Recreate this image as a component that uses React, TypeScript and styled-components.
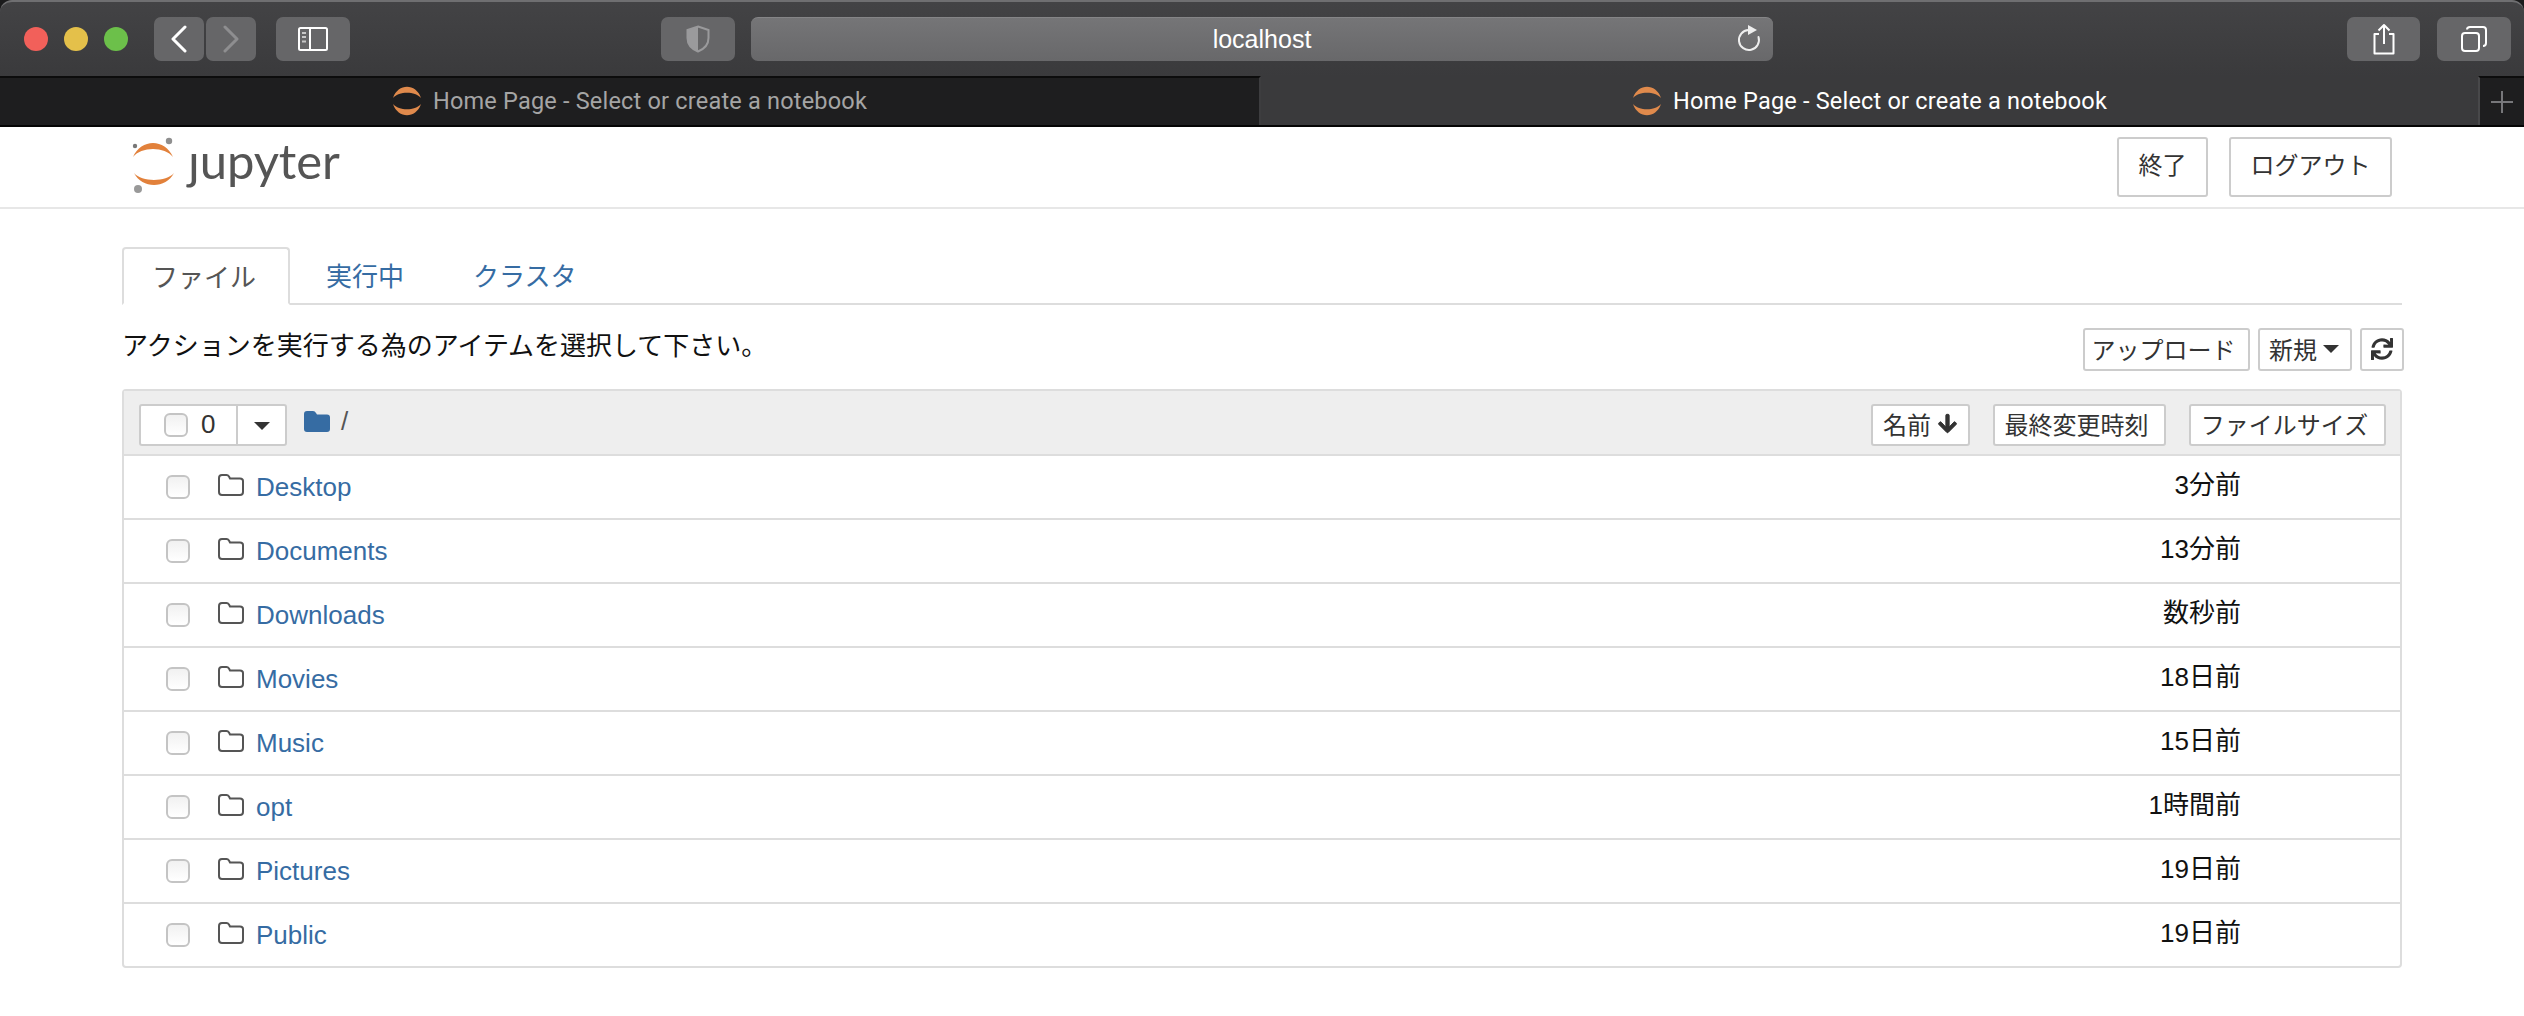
import React from "react";
import styled, { createGlobalStyle } from "styled-components";
import { FaArrowDown, FaSync } from "react-icons/fa";

const Global = createGlobalStyle`
  html, body { margin: 0; padding: 0; background: #fff; }
  body { font-family: "Liberation Sans", "Noto Sans CJK JP", sans-serif; overflow: hidden; }
  * { box-sizing: border-box; }
`;

const Window = styled.div`
  width: 2524px;
  height: 1016px;
  background: #fff;
  overflow: hidden;
`;

const Chrome = styled.div`
  background: #1b1b1c;
`;

const TitleBar = styled.div`
  height: 76px;
  display: flex;
  align-items: center;
  padding: 0 13px 0 24px;
  background: linear-gradient(#434345, #3a3a3c);
  border-top: 2px solid #6f6f71;
  border-radius: 12px 12px 0 0;
`;

const Lights = styled.div`
  display: flex;
  gap: 16px;
  margin-right: 26px;
`;

const Light = styled.span<{ $color: string }>`
  width: 24px;
  height: 24px;
  border-radius: 50%;
  background: ${(p) => p.$color};
`;

const ToolButton = styled.div<{ $w: number; $gap?: number }>`
  width: ${(p) => p.$w}px;
  height: 44px;
  margin-right: ${(p) => p.$gap ?? 0}px;
  border-radius: 7px;
  background: #666668;
  display: flex;
  align-items: center;
  justify-content: center;
  flex: none;
`;

const AddressBar = styled.div`
  position: relative;
  width: 1022px;
  height: 44px;
  border-radius: 7px;
  border-top: 1px solid #858587;
  background: linear-gradient(#757577, #68686a);
  color: #fff;
  font-size: 25px;
  display: flex;
  align-items: center;
  justify-content: center;
`;

const ReloadIcon = styled.svg`
  position: absolute;
  right: 11px;
  top: 6px;
`;

const Spacer = styled.div`
  flex: 1;
`;

const TabStrip = styled.div`
  height: 51px;
  display: flex;
  background: #3a3a3c;
  border-bottom: 2px solid #050505;
`;

const BrowserTab = styled.div<{ $active?: boolean }>`
  width: ${(p) => (p.$active ? 1217 : 1261)}px;
  background: ${(p) => (p.$active ? "#3a3a3c" : "#1e1e1f")};
  color: ${(p) => (p.$active ? "#fff" : "#a5a5a5")};
  ${(p) => (p.$active ? "" : "border-right: 2px solid #3d3d3f; border-top: 2px solid #0c0c0c; padding-bottom: 2px;")}
  display: flex;
  align-items: center;
  justify-content: center;
  gap: 11px;
  font-family: "Roboto", sans-serif;
  font-size: 23.5px;
  letter-spacing: 0.2px;
`;

const NewTab = styled.div`
  flex: 1;
  background: #1e1e1f;
  border-left: 2px solid #48484a;
  border-top: 2px solid #0c0c0c;
  display: flex;
  align-items: center;
  justify-content: center;
`;

const Header = styled.header`
  height: 82px;
  display: flex;
  align-items: center;
  padding: 0 132px 0 130px;
  border-bottom: 2px solid #e7e7e7;
`;

const Logo = styled.div`
  display: flex;
  align-items: center;
  flex: 1;
`;

const LogoText = styled.span`
  font-family: "Lato", sans-serif;
  font-size: 49px;
  line-height: 60px;
  color: #555;
  margin-left: 8px;
  padding-bottom: 14px;
  letter-spacing: -0.1px;
`;

const HeaderButton = styled.div<{ $w: number }>`
  width: ${(p) => p.$w}px;
  height: 60px;
  margin-left: 21px;
  padding-bottom: 7px;
  border: 2px solid #ccc;
  border-radius: 3px;
  display: flex;
  align-items: center;
  justify-content: center;
  font-size: 24px;
  color: #333;
`;

const Main = styled.main`
  padding: 38px 122px 0;
`;

const TabBar = styled.div`
  display: flex;
  height: 58px;
  border-bottom: 2px solid #ddd;
`;

const PageTab = styled.div<{ $active?: boolean }>`
  height: 58px;
  white-space: nowrap;
  width: ${(p) => (p.$active ? "168px" : "auto")};
  font-size: 26px;
  display: flex;
  align-items: center;
  justify-content: center;
  color: ${(p) => (p.$active ? "#555" : "#366ca3")};
  ${(p) =>
    p.$active
      ? "border: 2px solid #ddd; border-bottom: 2px solid #fff; border-radius: 4px 4px 0 0; background: #fff; padding: 0 4px 2px 0;"
      : "padding: 0 33px 3px 36px;"}
`;

const ActionRow = styled.div`
  height: 84px;
  display: flex;
  align-items: flex-start;
  justify-content: space-between;
  margin-right: -2px;
`;

const Message = styled.div`
  font-size: 26px;
  line-height: 36px;
  color: #111;
  margin-top: 23px;
`;

const ActionGroup = styled.div`
  display: flex;
  gap: 8px;
  margin-top: 23px;
`;

const SmallButton = styled.div<{ $w: number; $h?: number; $shift?: number }>`
  width: ${(p) => p.$w}px;
  height: ${(p) => p.$h ?? 43}px;
  padding: 0 ${(p) => p.$shift ?? 0}px 2px 0;
  border: 2px solid #ccc;
  border-radius: 3px;
  background: #fff;
  display: flex;
  align-items: center;
  justify-content: center;
  gap: 6px;
  font-size: 24px;
  color: #333;
  flex: none;
`;

const Caret = styled.span`
  width: 0;
  height: 0;
  border-left: 8px solid transparent;
  border-right: 8px solid transparent;
  border-top: 8px solid #333;
`;

const List = styled.div`
  border: 2px solid #ddd;
  border-radius: 4px;
`;

const ListHeader = styled.div`
  height: 65px;
  background: #eee;
  border-bottom: 2px solid #ddd;
  display: flex;
  align-items: center;
  padding: 4px 14px 0 15px;
`;

const SelectGroup = styled.div`
  width: 148px;
  height: 42px;
  display: flex;
  border: 2px solid #ccc;
  border-radius: 3px;
  background: #fff;
  flex: none;
`;

const SelectCount = styled.div`
  width: 97px;
  border-right: 2px solid #ccc;
  display: flex;
  align-items: center;
  padding-left: 23px;
  gap: 13px;
  font-size: 26px;
  color: #333;
`;

const SelectCaret = styled.div`
  flex: 1;
  display: flex;
  align-items: center;
  justify-content: center;
  padding-top: 3px;
`;

const Check = styled.span`
  display: block;
  width: 24px;
  height: 24px;
  flex: none;
  border: 2px solid #c4c4c4;
  border-radius: 6px;
  background: linear-gradient(#f1f1f1, #fff);
`;

const Crumb = styled.div`
  flex: 1;
  display: flex;
  align-items: center;
  gap: 11px;
  margin-left: 17px;
  margin-top: -7px;
  font-size: 26px;
  color: #555;
`;

const SortGroup = styled.div`
  display: flex;
  gap: 23px;
`;

const Row = styled.div`
  height: 64px;
  display: flex;
  align-items: center;
  padding: 0 159px 0 42px;
  border-bottom: 2px solid #ddd;
  &:last-child { border-bottom: 0; height: 62px; }
`;

const FolderIcon = styled.svg`
  margin-left: 28px;
  margin-right: 12px;
  margin-top: -4px;
  flex: none;
`;

const RowLink = styled.span`
  flex: 1;
  font-size: 26px;
  color: #366ca3;
`;

const RowTime = styled.span`
  font-size: 26px;
  color: #111;
  padding-bottom: 10px;
`;

const JupyterFavicon = () => (
  <svg width="30" height="30" viewBox="0 0 30 30">
    <path d="M1 12 C6 -3 24 -3 29 12 C23 5 7 5 1 12 Z" fill="#e08a4c" />
    <path d="M1 18 C6 33 24 33 29 18 C23 25 7 25 1 18 Z" fill="#e08a4c" />
  </svg>
);

const JupyterMark = () => (
  <svg width="50" height="60" viewBox="0 0 50 60">
    <path d="M3 20 C11 1.3 35 1.3 43 20 C35 9.3 11 9.3 3 20 Z" fill="#e2813b" />
    <path d="M4 36 C12 52 36 52 44 36 C36 45.3 12 45.3 4 36 Z" fill="#e2813b" />
    <circle cx="39" cy="4" r="3.2" fill="#8f8f8f" />
    <circle cx="5" cy="9" r="2.2" fill="#777" />
    <circle cx="8" cy="52" r="4" fill="#999" />
  </svg>
);

const Folder = () => (
  <FolderIcon width="26" height="22" viewBox="0 0 26 22" fill="none">
    <path
      d="M1 4 Q1 1 4 1 H8.5 Q10 1 11 2.5 L12 4.5 H22 Q25 4.5 25 7 V18 Q25 21 22 21 H4 Q1 21 1 18 Z"
      stroke="#555"
      strokeWidth="2"
    />
  </FolderIcon>
);

const rows: [string, string][] = [
  ["Desktop", "3分前"],
  ["Documents", "13分前"],
  ["Downloads", "数秒前"],
  ["Movies", "18日前"],
  ["Music", "15日前"],
  ["opt", "1時間前"],
  ["Pictures", "19日前"],
  ["Public", "19日前"],
];

export default function App() {
  return (
    <Window>
      <Global />
      <Chrome>
        <TitleBar>
          <Lights>
            <Light $color="#f2605a" />
            <Light $color="#e4c04a" />
            <Light $color="#6cc04a" />
          </Lights>
          <ToolButton $w={50} $gap={2}>
            <svg width="18" height="28" viewBox="0 0 18 28" fill="none">
              <path d="M15 2 L3 14 L15 26" stroke="#fff" strokeWidth="3" strokeLinecap="round" strokeLinejoin="round" />
            </svg>
          </ToolButton>
          <ToolButton $w={50} $gap={20}>
            <svg width="18" height="28" viewBox="0 0 18 28" fill="none">
              <path d="M3 2 L15 14 L3 26" stroke="#8e8e90" strokeWidth="3" strokeLinecap="round" strokeLinejoin="round" />
            </svg>
          </ToolButton>
          <ToolButton $w={74} $gap={311}>
            <svg width="30" height="24" viewBox="0 0 30 24" fill="none">
              <rect x="1" y="1" width="28" height="22" rx="1.5" stroke="#fff" strokeWidth="2" />
              <path d="M12 1 V23" stroke="#fff" strokeWidth="2" />
              <path d="M4 6 H8 M4 10 H8 M4 14.5 H8" stroke="#c8c8c8" strokeWidth="2" />
            </svg>
          </ToolButton>
          <ToolButton $w={74} $gap={16}>
            <svg width="24" height="28" viewBox="0 0 24 28" fill="none">
              <path d="M12 1.5 L22.5 5 V13 C22.5 20 17 24.5 12 26.5 C7 24.5 1.5 20 1.5 13 V5 Z" stroke="#9a9a9c" strokeWidth="2" />
              <path d="M12 1.5 L1.5 5 V13 C1.5 20 7 24.5 12 26.5 Z" fill="#9a9a9c" />
            </svg>
          </ToolButton>
          <AddressBar>
            localhost
            <ReloadIcon width="26" height="28" viewBox="0 0 26 28" fill="none">
              <path d="M12.5 6 A10 10 0 1 0 22.5 13" stroke="#eee" strokeWidth="2" strokeLinecap="round" />
              <path d="M12 1 L21 6 L12 11 Z" fill="#eee" />
            </ReloadIcon>
          </AddressBar>
          <Spacer />
          <ToolButton $w={73} $gap={17}>
            <svg width="24" height="32" viewBox="0 0 24 32" fill="none">
              <path d="M7 11 H2.5 V30.5 H21.5 V11 H17" stroke="#fff" strokeWidth="2" strokeLinejoin="round" />
              <path d="M12 21 V2 M6.5 7.5 L12 2 L17.5 7.5" stroke="#fff" strokeWidth="2" strokeLinejoin="round" />
            </svg>
          </ToolButton>
          <ToolButton $w={74}>
            <svg width="26" height="26" viewBox="0 0 26 26" fill="none">
              <rect x="1" y="7" width="17" height="18" rx="3" stroke="#fff" strokeWidth="2" />
              <path d="M6 3.5 Q6 1 9 1 H22 Q25 1 25 4 V17 Q25 20 22 20" stroke="#fff" strokeWidth="2" />
            </svg>
          </ToolButton>
        </TitleBar>
        <TabStrip>
          <BrowserTab>
            <JupyterFavicon />
            Home Page - Select or create a notebook
          </BrowserTab>
          <BrowserTab $active>
            <JupyterFavicon />
            Home Page - Select or create a notebook
          </BrowserTab>
          <NewTab>
            <svg width="24" height="24" viewBox="0 0 24 24" fill="none">
              <path d="M12 1 V23 M1 12 H23" stroke="#77777a" strokeWidth="2" />
            </svg>
          </NewTab>
        </TabStrip>
      </Chrome>
      <Header>
        <Logo>
          <JupyterMark />
          <LogoText>ȷupyter</LogoText>
        </Logo>
        <HeaderButton $w={91}>終了</HeaderButton>
        <HeaderButton $w={163}>ログアウト</HeaderButton>
      </Header>
      <Main>
        <TabBar>
          <PageTab $active>ファイル</PageTab>
          <PageTab>実行中</PageTab>
          <PageTab>クラスタ</PageTab>
        </TabBar>
        <ActionRow>
          <Message>アクションを実行する為のアイテムを選択して下さい。</Message>
          <ActionGroup>
            <SmallButton $w={167} $shift={6}>アップロード</SmallButton>
            <SmallButton $w={94} $shift={2}>
              新規
              <Caret />
            </SmallButton>
            <SmallButton $w={44}>
              <FaSync size={22} color="#333" />
            </SmallButton>
          </ActionGroup>
        </ActionRow>
        <List>
          <ListHeader>
            <SelectGroup>
              <SelectCount>
                <Check />0
              </SelectCount>
              <SelectCaret>
                <Caret />
              </SelectCaret>
            </SelectGroup>
            <Crumb>
              <svg width="26" height="21" viewBox="0 0 26 21">
                <path d="M0 3 Q0 0 3 0 H9 Q11 0 12 2 L13 3.5 H23 Q26 3.5 26 6.5 V18 Q26 21 23 21 H3 Q0 21 0 18 Z" fill="#366ca3" />
              </svg>
              /
            </Crumb>
            <SortGroup>
              <SmallButton $w={99} $h={42}>
                名前
                <FaArrowDown size={21} color="#333" stroke="#333" strokeWidth={24} />
              </SmallButton>
              <SmallButton $w={173} $h={42} $shift={6}>最終変更時刻</SmallButton>
              <SmallButton $w={197} $h={42} $shift={6}>ファイルサイズ</SmallButton>
            </SortGroup>
          </ListHeader>
          {rows.map(([name, time]) => (
            <Row key={name}>
              <Check />
              <Folder />
              <RowLink>{name}</RowLink>
              <RowTime>{time}</RowTime>
            </Row>
          ))}
        </List>
      </Main>
    </Window>
  );
}
